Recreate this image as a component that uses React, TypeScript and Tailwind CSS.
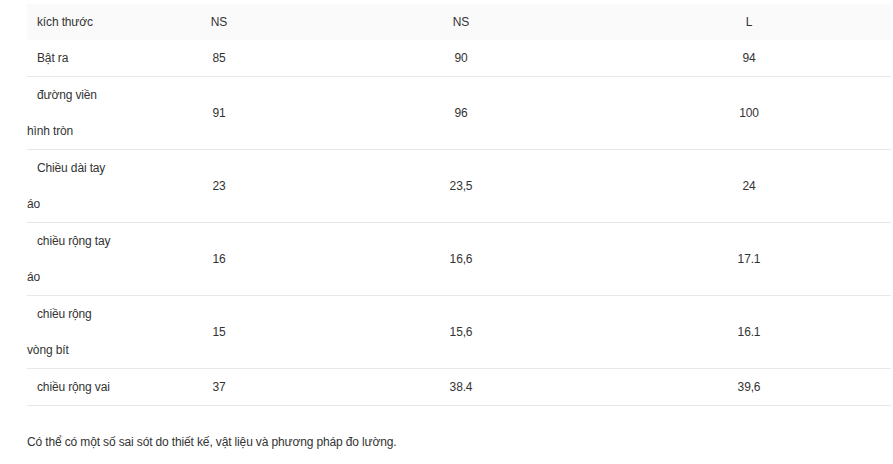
import React from 'react'

const rows: [string, string, string, string][] = [
  ['Bật ra', '85', '90', '94'],
  ['đường viền hình tròn', '91', '96', '100'],
  ['Chiều dài tay áo', '23', '23,5', '24'],
  ['chiều rộng tay áo', '16', '16,6', '17.1'],
  ['chiều rộng vòng bít', '15', '15,6', '16.1'],
  ['chiều rộng vai', '37', '38.4', '39,6']
]

export default function App() {
  return (
    <div
      className="w-[893px] h-[464px] bg-white pt-[4px] pl-[27px] pr-[2px] text-[12px] tracking-[-0.14px] text-[#333]"
      style={{ fontFamily: '"Liberation Sans", Arial, sans-serif' }}
    >
      <table className="w-[864px] table-fixed border-collapse leading-[36px]">
        <colgroup>
          <col className="w-[96px]" />
          <col className="w-[192px]" />
          <col className="w-[292px]" />
          <col className="w-[284px]" />
        </colgroup>
        <thead>
          <tr className="bg-[#fafafa]">
            <th className="font-normal text-left indent-[10px] pr-[8px]">kích thước</th>
            <th className="font-normal text-center">NS</th>
            <th className="font-normal text-center">NS</th>
            <th className="font-normal text-center">L</th>
          </tr>
        </thead>
        <tbody>
          {rows.map((r) => (
            <tr key={r[0]} className="border-b border-[#e8e8e8]">
              <td className="text-left indent-[10px] pr-[8px] align-middle">{r[0]}</td>
              <td className="text-center align-middle">{r[1]}</td>
              <td className="text-center align-middle">{r[2]}</td>
              <td className="text-center align-middle">{r[3]}</td>
            </tr>
          ))}
        </tbody>
      </table>
      <p className="mt-[26px] leading-[20px]">
        Có thể có một số sai sót do thiết kế, vật liệu và phương pháp đo lường.
      </p>
    </div>
  )
}
